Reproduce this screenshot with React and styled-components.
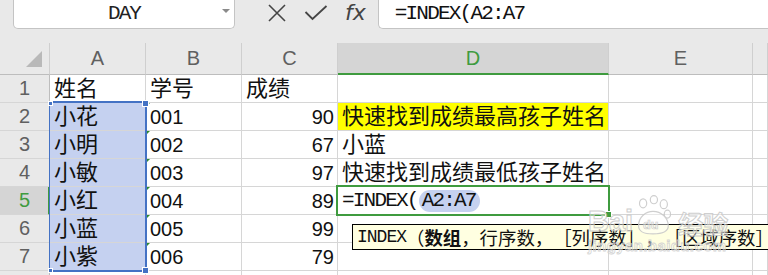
import React from 'react';
import styled, { createGlobalStyle, css } from 'styled-components';

const GlobalStyle = createGlobalStyle`
  html, body { margin: 0; padding: 0; }
  body { background: #e9e9e9; }
`;

const GREEN = '#3f9b3f';
const BLUE = '#4472c4';
const GRID = '#d6d6d6';
const MONO = '"Liberation Mono", "Cousine", "Courier New", "DejaVu Sans Mono", monospace';

const Page = styled.div`
  position: relative;
  width: 768px;
  height: 275px;
  overflow: hidden;
  background: #e9e9e9;
  font-family: "Liberation Sans", "Noto Sans CJK SC", sans-serif;
`;

const TopBar = styled.div`
  display: flex;
  align-items: flex-start;
  height: 29px;
`;

const NameBox = styled.div`
  box-sizing: border-box;
  margin-left: 13px;
  width: 222px;
  height: 29px;
  background: #fff;
  border: 1px solid #c4c4c4;
  border-top: none;
  border-radius: 0 0 5px 5px;
  display: flex;
  align-items: center;
  padding: 0 4px 0 0;
`;

const NameText = styled.span`
  flex: 1;
  text-align: center;
  padding-left: 12px;
  font-family: ${MONO};
  font-size: 21px;
  letter-spacing: -2px;
  color: #222;
  line-height: 26px;
`;

const Caret = styled.span`
  width: 0;
  height: 0;
  border-left: 4px solid transparent;
  border-right: 4px solid transparent;
  border-top: 4px solid #8a8a8a;
  margin-bottom: 6px;
`;

const Tools = styled.div`
  display: flex;
  align-items: center;
  height: 26px;
  margin-left: 32px;
  gap: 17px;
  color: #444;
`;

const Fx = styled.span`
  font-family: "DejaVu Sans", sans-serif;
  font-style: italic;
  font-size: 22px;
  color: #444;
  line-height: 24px;
`;

const FormulaInput = styled.div`
  box-sizing: border-box;
  flex: 1;
  margin-left: 12px;
  height: 29px;
  background: #fff;
  border-left: 1px solid #c4c4c4;
  border-bottom: 1px solid #c4c4c4;
  border-bottom-left-radius: 5px;
  padding-left: 16px;
  font-family: ${MONO};
  font-size: 21px;
  letter-spacing: -1.8px;
  line-height: 27px;
  color: #111;
`;

const Spacer = styled.div`
  height: 14px;
`;

const Sheet = styled.div`
  display: grid;
  grid-template-columns: 50px 96px 96px 96px 271px 144px 15px;
  grid-template-rows: 32px repeat(8, 28px);
  background: #fff;
`;

const Base = styled.div`
  box-sizing: border-box;
  grid-row: ${p => p.$r};
  grid-column: ${p => p.$c};
  display: flex;
  align-items: center;
  min-width: 0;
  overflow: hidden;
  white-space: nowrap;
`;

const ColHead = styled(Base)`
  justify-content: center;
  background: ${p => (p.$active ? '#d5d5d5' : '#e9e9e9')};
  color: ${p => (p.$active ? GREEN : '#606060')};
  border-right: 1px solid #cfcfcf;
  border-bottom: ${p => (p.$active ? `2px solid ${GREEN}` : '1px solid #bdbdbd')};
  font-size: 20px;
  padding-top: ${p => (p.$active ? '1px' : '0')};
`;

const Corner = styled(Base)`
  background: #e9e9e9;
  border-right: 1px solid #cfcfcf;
  border-bottom: 1px solid #bdbdbd;
  justify-content: flex-end;
  align-items: flex-end;
  padding: 0 7px 7px 0;
`;

const RowHead = styled(Base)`
  justify-content: center;
  background: ${p => (p.$active ? '#d5d5d5' : '#e9e9e9')};
  color: ${p => (p.$active ? GREEN : '#606060')};
  border-right: ${p => (p.$active ? `2px solid ${GREEN}` : '1px solid #bdbdbd')};
  border-bottom: 1px solid ${GRID};
  font-size: 20px;
  padding-left: ${p => (p.$active ? '1px' : '0')};
`;

const Cell = styled(Base)`
  position: relative;
  background: ${p => p.$fill || '#fff'};
  border-right: 1px solid ${GRID};
  border-bottom: 1px solid ${GRID};
  padding: 0 3px 0 4px;
  justify-content: ${p => (p.$right ? 'flex-end' : 'flex-start')};
  font-size: 22px;
  color: #111;
  line-height: 26px;
  ${p =>
    p.$flag &&
    css`
      &::before {
        content: '';
        position: absolute;
        left: 0;
        top: 0;
        border-top: 4px solid #2e8b2e;
        border-right: 4px solid transparent;
      }
    `}
`;

const Num = styled.span`
  font-family: "Liberation Sans", sans-serif;
  font-size: 20px;
`;

const Formula = styled.span`
  display: flex;
  align-items: center;
  font-family: ${MONO};
  font-size: 21px;
  letter-spacing: -1.8px;
  color: #111;
`;

const RefPill = styled.span`
  background: #c5d1f0;
  border-radius: 11px;
  padding: 0 4px 0 3px;
  line-height: 22px;
  margin-left: 1px;
`;

const SelectionBox = styled.div`
  grid-row: 3 / span 6;
  grid-column: 2;
  margin: -2px -1px -1px -1px;
  border: 2px solid ${BLUE};
  border-left-width: 1px;
  position: relative;
  z-index: 2;
  pointer-events: none;
`;

const Handle = styled.span`
  position: absolute;
  width: ${p => p.$size}px;
  height: ${p => p.$size}px;
  background: ${p => p.$color};
  border: 1px solid #fff;
  ${p => (p.$top ? 'top' : 'bottom')}: -${p => p.$size / 2 + 1}px;
  ${p => (p.$left ? 'left' : 'right')}: -${p => p.$size / 2 + 1}px;
`;

const ActiveBox = styled.div`
  grid-row: 6;
  grid-column: 5;
  margin: -2px -1px -1px -2px;
  border: 2px solid ${GREEN};
  position: relative;
  z-index: 2;
  pointer-events: none;
`;

const Tooltip = styled.div`
  position: absolute;
  left: 352px;
  top: 224px;
  width: 440px;
  height: 26px;
  box-sizing: border-box;
  background: #ffffe1;
  border: 1px solid #000;
  display: flex;
  align-items: center;
  padding-left: 4px;
  font-family: "Noto Sans CJK SC", sans-serif;
  font-size: 18.4px;
  text-spacing-trim: space-all;
  color: #111;
  white-space: nowrap;
  z-index: 3;
`;

const TipName = styled.span`
  font-family: ${MONO};
  font-size: 18px;
  letter-spacing: -1px;
`;

const Bold = styled.b`
  font-weight: 700;
`;

const Watermark = styled.div`
  position: absolute;
  left: 588px;
  top: 188px;
  z-index: 4;
  pointer-events: none;
  display: flex;
  flex-direction: column;
  align-items: flex-start;
  opacity: 0.9;
`;

const WmRow = styled.div`
  display: flex;
  align-items: flex-end;
  height: 48px;
  gap: 2px;
`;

const WmText = styled.span`
  font-family: ${p => (p.$cjk ? '"Noto Sans CJK SC", sans-serif' : '"Liberation Sans", sans-serif')};
  font-weight: 700;
  font-size: ${p => p.$size}px;
  line-height: 1;
  margin-left: ${p => (p.$cjk ? 5 : 0)}px;
  color: rgba(255, 255, 255, 0.5);
  -webkit-text-stroke: 1px #cacaca;
`;

const WmUrl = styled.span`
  font-family: "Liberation Sans", sans-serif;
  font-size: 15px;
  font-weight: 700;
  color: rgba(255, 255, 255, 0.4);
  -webkit-text-stroke: 0.8px #d0d0d0;
  letter-spacing: 0.4px;
  margin-top: 1px;
`;

const Paw = () => (
  <svg width="36" height="42" viewBox="0 0 40 44">
    <g fill="rgba(255,255,255,0.5)" stroke="#cacaca" strokeWidth="1.3">
      <ellipse cx="9" cy="9" rx="4" ry="5" />
      <ellipse cx="21" cy="5" rx="4" ry="4.5" />
      <ellipse cx="32" cy="10" rx="4" ry="5" />
      <ellipse cx="36" cy="21" rx="3.5" ry="4.5" />
      <path d="M4 34 C4 24 12 18 20 18 C29 18 37 25 37 34 C37 41 30 43 20 43 C10 43 4 41 4 34 Z" />
    </g>
    <text x="9" y="38" fontFamily="Liberation Sans" fontWeight="700" fontSize="14" fill="rgba(255,255,255,0.5)" stroke="#cacaca" strokeWidth="0.8">du</text>
  </svg>
);

const XIcon = () => (
  <svg width="20" height="20" viewBox="0 0 20 20">
    <path d="M2 2 L18 18 M18 2 L2 18" stroke="#454545" strokeWidth="1.6" fill="none" />
  </svg>
);

const CheckIcon = () => (
  <svg width="24" height="16" viewBox="0 0 24 16">
    <path d="M1.5 7 L8.5 14 L22.5 1" stroke="#454545" strokeWidth="1.8" fill="none" />
  </svg>
);

const cols = ['A', 'B', 'C', 'D', 'E', ''];

const rows = [
  ['姓名', '学号', '', ''],
  ['小花', '001', '90', '快速找到成绩最高孩子姓名'],
  ['小明', '002', '67', '小蓝'],
  ['小敏', '003', '97', '快速找到成绩最低孩子姓名'],
  ['小红', '004', '89', 'FORMULA'],
  ['小蓝', '005', '99', ''],
  ['小紫', '006', '79', ''],
  ['', '', '', ''],
];

export default function App() {
  return (
    <Page>
      <GlobalStyle />
      <TopBar>
        <NameBox>
          <NameText>DAY</NameText>
          <Caret />
        </NameBox>
        <Tools>
          <XIcon />
          <CheckIcon />
          <Fx>fx</Fx>
        </Tools>
        <FormulaInput>=INDEX(A2:A7</FormulaInput>
      </TopBar>
      <Spacer />
      <Sheet>
        <Corner $r={1} $c={1}>
          <svg width="16" height="16" viewBox="0 0 16 16">
            <path d="M16 0 L16 16 L0 16 Z" fill="#b9b9b9" />
          </svg>
        </Corner>
        {cols.map((c, i) => (
          <ColHead key={c + i} $r={1} $c={i + 2} $active={c === 'D'}>
            {c}
          </ColHead>
        ))}
        {rows.map((row, ri) => {
          const r = ri + 2;
          const n = ri + 1;
          const [a, b, cVal, d] = row;
          const head1 = ri === 0;
          return (
            <React.Fragment key={n}>
              <RowHead $r={r} $c={1} $active={n === 5}>
                {n <= 7 ? n : ''}
              </RowHead>
              <Cell $r={r} $c={2} $fill={n >= 2 && n <= 7 ? '#c5d1f0' : undefined}>
                {a}
              </Cell>
              <Cell $r={r} $c={3} $flag={!head1 && b !== ''}>
                {head1 ? b : <Num>{b}</Num>}
              </Cell>
              <Cell $r={r} $c={4} $right={!head1}>
                {head1 ? '成绩' : <Num>{cVal}</Num>}
              </Cell>
              <Cell $r={r} $c={5} $fill={n === 2 ? '#ffff00' : undefined}>
                {d === 'FORMULA' ? (
                  <Formula>
                    =INDEX(<RefPill>A2:A7</RefPill>
                  </Formula>
                ) : (
                  d
                )}
              </Cell>
              <Cell $r={r} $c={6} />
              <Cell $r={r} $c={7} />
            </React.Fragment>
          );
        })}
        <SelectionBox>
          <Handle $size={3} $color={BLUE} $top $left />
          <Handle $size={5} $color={BLUE} $top />
          <Handle $size={3} $color={BLUE} $left />
          <Handle $size={5} $color={BLUE} />
        </SelectionBox>
        <ActiveBox>
          <Handle $size={5} $color={GREEN} />
        </ActiveBox>
      </Sheet>
      <Tooltip>
        <TipName>INDEX</TipName>（<Bold>数组</Bold>，行序数，［列序数］，［区域序数］
      </Tooltip>
      <Watermark>
        <WmRow>
          <WmText $size={29}>Bai</WmText>
          <Paw />
          <WmText $cjk $size={25}>经验</WmText>
        </WmRow>
        <WmUrl>jingyan.baidu.com</WmUrl>
      </Watermark>
    </Page>
  );
}
